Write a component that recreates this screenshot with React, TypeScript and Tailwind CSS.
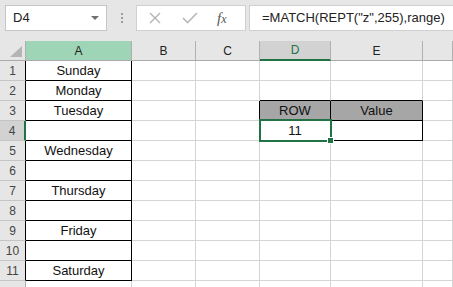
import React from 'react';

const days: Record<number, string> = {
  1: 'Sunday',
  2: 'Monday',
  3: 'Tuesday',
  5: 'Wednesday',
  7: 'Thursday',
  9: 'Friday',
  11: 'Saturday',
};

const cols = ['A', 'B', 'C', 'D', 'E', ''];
const rows = [1, 2, 3, 4, 5, 6, 7, 8, 9, 10, 11, 12];

function Toolbar() {
  return (
    <div className="flex h-[41px] items-start bg-[#e6e6e6] pt-[5px]">
      {/* Name box */}
      <div className="ml-[5px] flex h-[26px] w-[102px] items-center justify-between border border-[#c6c6c6] bg-white pl-[7px] pr-[7px]">
        <span className="text-[13px] text-[#222]">D4</span>
        <svg width="8" height="5" viewBox="0 0 8 5">
          <path d="M0 0 L8 0 L4 4 Z" fill="#6f6f6f" />
        </svg>
      </div>
      {/* Grip dots */}
      <div className="ml-[14px] mt-[8px] flex flex-col gap-[2px]">
        <span className="h-[2px] w-[2px] bg-[#9c9c9c]" />
        <span className="h-[2px] w-[2px] bg-[#9c9c9c]" />
        <span className="h-[2px] w-[2px] bg-[#9c9c9c]" />
      </div>
      {/* Cancel / enter / fx */}
      <div className="ml-[13px] flex h-[26px] w-[110px] items-center border border-[#d0d0d0] bg-white">
        <svg className="ml-[12px]" width="12" height="12" viewBox="0 0 12 12">
          <path d="M1 1 L11 11 M11 1 L1 11" stroke="#b3b3b3" strokeWidth="1.4" />
        </svg>
        <svg className="ml-[21px]" width="16" height="12" viewBox="0 0 16 12">
          <path d="M1 6 L5.5 10.5 L15 1" stroke="#b8b8b8" strokeWidth="1.6" fill="none" />
        </svg>
        <span className="ml-[19px] font-['Liberation_Serif',serif] text-[15px] italic text-[#555]">
          f<span className="text-[12px]">x</span>
        </span>
      </div>
      {/* Formula */}
      <div className="ml-[3px] flex h-[26px] flex-1 items-center border border-r-0 border-[#d0d0d0] bg-white pl-[12px]">
        <span className="whitespace-nowrap text-[13px] text-[#222]">=MATCH(REPT("z",255),range)</span>
      </div>
    </div>
  );
}

function Cell({ row, col }: { row: number; col: number }) {
  const black = 'border-r-black';
  let right = 'border-r-[#d4d4d4]';
  let bottom = 'border-b-[#d4d4d4]';
  let bg = 'bg-white';
  let text = '';

  if (col === 0) {
    text = days[row] ?? '';
    if (row <= 11) {
      right = black;
      bottom = 'border-b-black';
    }
  }
  if (col === 2 && (row === 3 || row === 4)) right = black;
  if (col === 3 || col === 4) {
    if (row >= 2 && row <= 4) bottom = 'border-b-black';
    if (row === 3 || row === 4) right = black;
    if (row === 3) bg = 'bg-[#a6a6a6]';
    if (row === 3) text = col === 3 ? 'ROW' : 'Value';
    if (row === 4 && col === 3) text = '11';
  }

  return (
    <div className={`relative flex items-center justify-center border-r border-b ${right} ${bottom} ${bg} text-[13px] text-[#111]`}>
      {text}
      {row === 4 && col === 3 && (
        <>
          <div className="absolute -top-[2px] -left-[1px] -right-[2px] -bottom-[2px] z-10 border-2 border-[#217346]" />
          <div className="absolute -right-[4px] -bottom-[4px] z-20 h-[7px] w-[7px] border border-white bg-[#217346]" />
        </>
      )}
    </div>
  );
}

export default function App() {
  return (
    <div className="h-[287px] w-[453px] overflow-hidden bg-white font-['Liberation_Sans',Arial,sans-serif]">
      <Toolbar />
      <div className="grid grid-cols-[26px_106px_64px_64px_71px_92px_1fr] grid-rows-[20px_repeat(12,20px)]">
        {/* Corner */}
        <div className="flex items-end justify-end border-r border-b border-r-[#b0b0b0] border-b-[#ababab] bg-[#e6e6e6] pr-[3px] pb-[3px]">
          <svg width="12" height="11" viewBox="0 0 12 11">
            <path d="M12 0 L12 11 L0 11 Z" fill="#b5b5b5" />
          </svg>
        </div>
        {cols.map((c, i) => (
          <div
            key={i}
            className={`flex items-center justify-center border-r border-r-[#b0b0b0] text-[12px] ${
              i === 0
                ? 'border-b border-b-[#ababab] bg-[#9fd5b7] text-[#222]'
                : i === 3
                ? 'border-b-2 border-b-[#217346] bg-[#d2d2d2] text-[#217346]'
                : 'border-b border-b-[#ababab] bg-[#e6e6e6] text-[#222]'
            }`}
          >
            {c}
          </div>
        ))}
        {rows.map((r) => (
          <React.Fragment key={r}>
            <div
              className={`flex items-center justify-center border-b border-b-[#c4c4c4] text-[12px] text-[#444] ${
                r === 4
                  ? 'border-r-2 border-r-[#217346] bg-[#d2d2d2]'
                  : r <= 11
                  ? 'border-r border-r-black bg-[#e6e6e6]'
                  : 'border-r border-r-[#b0b0b0] bg-[#e6e6e6]'
              }`}
            >
              {r <= 11 ? r : ''}
            </div>
            {[0, 1, 2, 3, 4, 5].map((c) => (
              <Cell key={c} row={r} col={c} />
            ))}
          </React.Fragment>
        ))}
      </div>
    </div>
  );
}
